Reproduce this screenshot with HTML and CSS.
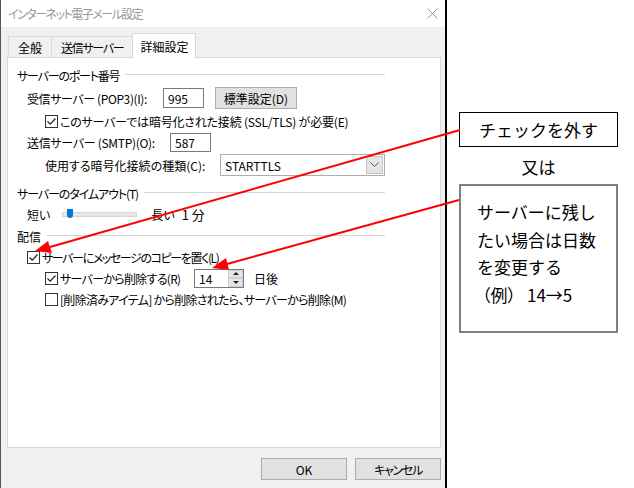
FILE: index.html
```html
<!DOCTYPE html>
<html lang="ja">
  <head>
    <meta charset="UTF-8" />
    <title>インターネット電子メール設定</title>
    <link rel="stylesheet" href="styles.css">
  </head>
  <body>
    <div class="page">
      <div class="dialog">
        <div class="titlebar">
          <span class="title">インターネット電子メール設定</span>
          <svg class="close" width="11" height="11" viewBox="0 0 11 11">
            <path d="M0.5 0.5 L10.5 10.5 M10.5 0.5 L0.5 10.5" stroke="#999" stroke-width="1" fill="none" />
          </svg>
        </div>
        <div class="dialog-body">
          <ul class="tabs">
            <li class="tab">全般</li>
            <li class="tab kana">送信サーバー</li>
            <li class="tab active">詳細設定</li>
          </ul>
          <div class="panel">
            <div class="group-title gt-port"><span>サーバーのポート番号</span></div>
            <div class="row row-pop3 indent1">
              <span class="label w-pop3">受信サーバー (POP3)(I):</span>
              <span class="textbox tb-pop3">995</span>
              <span class="btn btn-default">標準設定(D)</span>
            </div>
            <div class="row row-ssl indent2">
              <span class="check checked"><svg width="11" height="11" viewBox="0 0 11 11"><path d="M1.5 5.5 L4.2 8.2 L9.5 2.5" stroke="#222" stroke-width="1.2" fill="none" /></svg></span>
              <span>このサーバーでは暗号化された接続 (SSL/TLS) が必要(E)</span>
            </div>
            <div class="row row-smtp indent1">
              <span class="label w-smtp">送信サーバー (SMTP)(O):</span>
              <span class="textbox tb-smtp">587</span>
            </div>
            <div class="row row-enc indent2">
              <span class="label w-enc">使用する暗号化接続の種類(C):</span>
              <span class="select">
                <span class="select-value">STARTTLS</span>
                <span class="select-arrow"><svg width="9" height="6" viewBox="0 0 9 6"><path d="M0.5 0.5 L4.5 4.5 L8.5 0.5" stroke="#555" stroke-width="1" fill="none" /></svg></span>
              </span>
            </div>

            <div class="group-title gt-timeout"><span>サーバーのタイムアウト(T)</span></div>
            <div class="row row-slider indent1">
              <span>短い</span>
              <span class="track"><span class="thumb"></span></span>
              <span class="long">長い</span>
              <span class="minutes">1 分</span>
            </div>

            <div class="group-title gt-deliver"><span>配信</span></div>
            <div class="row row-cb1 indent1">
              <span class="check checked"><svg width="11" height="11" viewBox="0 0 11 11"><path d="M1.5 5.5 L4.2 8.2 L9.5 2.5" stroke="#222" stroke-width="1.2" fill="none" /></svg></span>
              <span>サーバーにメッセージのコピーを置く(L)</span>
            </div>
            <div class="row row-cb2 indent2">
              <span class="check checked"><svg width="11" height="11" viewBox="0 0 11 11"><path d="M1.5 5.5 L4.2 8.2 L9.5 2.5" stroke="#222" stroke-width="1.2" fill="none" /></svg></span>
              <span class="label w-del">サーバーから削除する(R)</span>
              <span class="spin">
                <span class="spin-value">14</span>
                <span class="spin-btns">
                  <span class="spin-up"></span>
                  <span class="spin-down"></span>
                </span>
              </span>
              <span class="days">日後</span>
            </div>
            <div class="row row-cb3 indent2">
              <span class="check"></span>
              <span>[削除済みアイテム] から削除されたら、サーバーから削除(M)</span>
            </div>
          </div>
          <div class="buttons">
            <span class="btn btn-dlg">OK</span>
            <span class="btn btn-dlg kana">キャンセル</span>
          </div>
        </div>
      </div>

      <div class="notes">
        <div class="note note-1">チェックを外す</div>
        <div class="or">又は</div>
        <div class="note note-2">サーバーに残し<br>たい場合は日数<br>を変更する<br><span class="example"><span class="example-label">（例）</span>14→5</span></div>
      </div>

      <svg class="arrows" width="634" height="488" viewBox="0 0 634 488">
        <line x1="460" y1="130" x2="50" y2="247" stroke="#f00" stroke-width="2" />
        <polygon points="35,251 52,253 48,241" fill="#f00" />
        <line x1="459" y1="200" x2="227" y2="264" stroke="#f00" stroke-width="2" />
        <polygon points="212,268 229,270 226,258" fill="#f00" />
      </svg>
    </div>
  </body>
</html>
```

FILE: styles.css
```css
html,
body {
  height: 100%;
  margin: 0;
}
body {
  background: #fff;
  font-family: "Noto Sans CJK JP", sans-serif;
  color: #000;
}
ul {
  margin: 0;
  padding: 0;
  list-style: none;
}

.page {
  position: relative;
  display: flex;
  width: 634px;
  height: 488px;
  overflow: hidden;
}

/* dialog */
.dialog {
  width: 444px;
  height: 488px;
  border-left: 1px solid #555;
  border-right: 2px solid #000;
  display: flex;
  flex-direction: column;
  font-size: 12px;
  font-feature-settings: "palt";
}
/* katakana runs are narrower in the system UI font */
.kana {
  letter-spacing: -1.3px;
}
.titlebar {
  height: 27px;
  background: #fff;
  display: flex;
  align-items: center;
  justify-content: space-between;
  padding: 0 7px 0 7px;
}
.title {
  color: #999;
  font-size: 12px;
  letter-spacing: -1.5px;
}
.dialog-body {
  flex: 1;
  background: #f0f0f0;
  padding: 7px 4px 0 6px;
}

.tabs {
  display: flex;
  align-items: flex-end;
  height: 23px;
  margin-left: 1px;
}
.tab {
  height: 20px;
  padding: 0 9px;
  border: 1px solid #d9d9d9;
  border-bottom: none;
  margin-right: -1px;
  display: flex;
  align-items: center;
  background: #f0f0f0;
}
.tab.active {
  height: 24px;
  margin-bottom: -1px;
  padding: 0 7px;
  background: #fff;
  position: relative;
  z-index: 1;
}

.panel {
  height: 391px;
  box-sizing: border-box;
  background: #fff;
  border: 1px solid #d9d9d9;
  padding: 7px 55px 0 9px;
}

.group-title {
  height: 20px;
  display: flex;
  align-items: center;
}
.group-title:after {
  content: '';
  flex: 1;
  height: 1px;
  background: #d5d5d5;
  margin: -2px 0 0 6px;
}
.gt-port span {
  letter-spacing: -1.2px;
}
.gt-timeout {
  margin-top: 6px;
}
.gt-timeout span {
  letter-spacing: -1.1px;
}
.gt-deliver {
  height: 22px;
}

.row {
  display: flex;
  align-items: center;
  white-space: nowrap;
}
.indent1 {
  margin-left: 10px;
}
.indent2 {
  margin-left: 28px;
}
.row-pop3 {
  height: 26px;
}
.row-ssl,
.row-cb1,
.row-cb3 {
  height: 20px;
}
.row-smtp,
.row-slider,
.row-cb2 {
  height: 22px;
}
.row-enc {
  height: 24px;
}
.row-ssl {
  letter-spacing: -0.2px;
}
.row-cb1 {
  letter-spacing: -1.4px;
}
.row-cb3 {
  letter-spacing: -0.7px;
}

.label {
  display: inline-block;
  flex-shrink: 0;
}
.w-pop3 {
  width: 136px;
  letter-spacing: -0.4px;
}
.w-smtp {
  width: 143px;
  letter-spacing: -0.3px;
}
.w-enc {
  width: 175px;
}
.w-del {
  width: 134px;
  letter-spacing: -0.7px;
}

.textbox {
  height: 20px;
  box-sizing: border-box;
  border: 1px solid #7a7a7a;
  background: #fff;
  padding-left: 4px;
  display: flex;
  align-items: center;
}
.tb-pop3 {
  width: 41px;
}
.tb-smtp {
  width: 41px;
  height: 19px;
}

.btn {
  box-sizing: border-box;
  height: 22px;
  background: #e1e1e1;
  border: 1px solid #adadad;
  display: flex;
  align-items: center;
  justify-content: center;
}
.btn-default {
  width: 82px;
  margin-left: 11px;
}

.check {
  width: 13px;
  height: 13px;
  box-sizing: border-box;
  border: 1px solid #333;
  background: #fff;
  margin-right: 2px;
  display: flex;
  align-items: center;
  justify-content: center;
  flex-shrink: 0;
}

.select {
  width: 165px;
  height: 22px;
  box-sizing: border-box;
  border: 1px solid #adadad;
  background: #fff;
  display: flex;
  align-items: center;
  justify-content: space-between;
}
.select-value {
  padding-left: 4px;
  font-size: 12px;
}
.select-arrow {
  width: 15px;
  height: 16px;
  margin-right: 1px;
  background: #e5e5e5;
  border: 1px solid #c4c4c4;
  display: flex;
  align-items: center;
  justify-content: center;
}

.track {
  position: relative;
  width: 73px;
  height: 3px;
  margin: 0 14px 0 12px;
  background: #e7e7e7;
  border: 1px solid #d6d6d6;
}
.thumb {
  position: absolute;
  left: 4px;
  top: -4px;
  width: 6px;
  height: 9px;
  background: #0078d7;
  border-radius: 0 0 3px 3px;
}
.minutes {
  margin-left: 7px;
  font-size: 13px;
}

.spin {
  width: 50px;
  height: 19px;
  box-sizing: border-box;
  border: 1px solid #7a7a7a;
  background: #fff;
  display: flex;
  align-items: center;
  justify-content: space-between;
}
.spin-value {
  padding-left: 4px;
}
.spin-btns {
  width: 15px;
  height: 17px;
  display: flex;
  flex-direction: column;
}
.spin-up,
.spin-down {
  flex: 1;
  background: #e5e5e5;
  border: 1px solid #cfcfcf;
  box-sizing: border-box;
  display: flex;
  align-items: center;
  justify-content: center;
}
.spin-up:before {
  content: '';
  border: 3px solid transparent;
  border-bottom: 3px solid #222;
  border-top: none;
}
.spin-down:before {
  content: '';
  border: 3px solid transparent;
  border-top: 3px solid #222;
  border-bottom: none;
}
.days {
  margin-left: 10px;
}

.buttons {
  display: flex;
  justify-content: flex-end;
  gap: 8px;
  margin-top: 10px;
}
.btn-dlg {
  width: 86px;
}

/* notes on the right */
.notes {
  padding: 112px 0 0 12px;
  font-size: 17px;
  width: 159px;
}
.note {
  box-sizing: border-box;
  width: 159px;
}
.note-1 {
  height: 35px;
  border: 1px solid #000;
  display: flex;
  align-items: center;
  justify-content: center;
}
.or {
  margin-top: 6px;
  line-height: 28px;
  text-align: center;
}
.note-2 {
  margin-top: 3px;
  height: 149px;
  border: 2px solid #808080;
  padding: 12px 0 0 16px;
  line-height: 27.5px;
}
.example {
  font-feature-settings: "palt";
  padding-left: 5px;
}
.example-label {
  margin-right: 11px;
}

.arrows {
  position: absolute;
  left: 0;
  top: 0;
  pointer-events: none;
}
```
